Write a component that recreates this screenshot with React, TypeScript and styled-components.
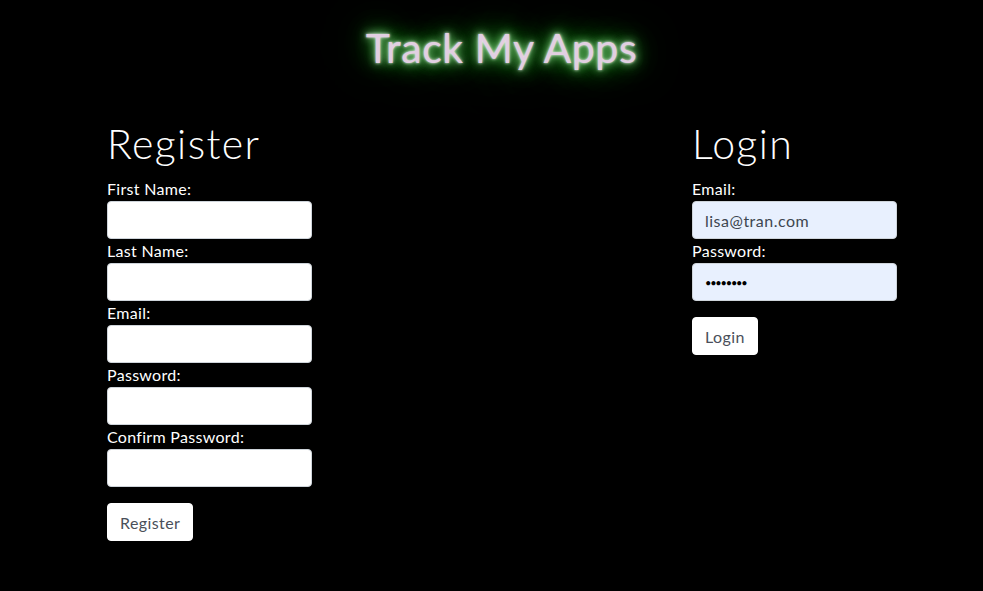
import * as React from 'react';
import styled, { createGlobalStyle } from 'styled-components';

const GlobalStyle = createGlobalStyle`
  html, body {
    margin: 0;
    padding: 0;
    background-color: #000000;
    font-family: "Lato", "Noto Sans", sans-serif;
    color: #ffffff;
  }
  * {
    box-sizing: border-box;
  }
`;

const Page = styled.div`
  min-height: 591px;
  background-color: #000000;
  padding-top: 24px;
`;

const Title = styled.h1`
  margin: 0 0 48px 0;
  text-align: center;
  font-size: 41px;
  line-height: 48px;
  font-weight: 400;
  letter-spacing: 0.6px;
  color: #e2cfe2;
  padding-left: 20px;
  text-shadow:
    0 0 3px #ffffff,
    0 0 8px #a0f0a0,
    0 0 16px #3cb83c,
    0 0 28px #1f9a1f,
    0 0 44px #168016,
    0 0 64px #0e5e0e;
`;

const Columns = styled.div`
  display: flex;
  justify-content: space-between;
  padding: 0 86px 0 107px;
`;

const FormColumn = styled.form`
  width: 205px;
  display: flex;
  flex-direction: column;
`;

const Heading = styled.h2`
  margin: 0 0 9px 0;
  font-size: 41px;
  line-height: 48px;
  font-weight: 300;
  letter-spacing: 1.4px;
  color: #ffffff;
`;

const Label = styled.label`
  display: block;
  font-size: 16px;
  line-height: 24px;
  letter-spacing: 0.3px;
  color: #ffffff;
`;

const Input = styled.input<{ $filled?: boolean; $secret?: boolean }>`
  display: block;
  width: 100%;
  height: 38px;
  padding: 6px 12px;
  font-family: "Lato", "Noto Sans", sans-serif;
  font-size: ${props => props.$secret ? "11px" : "16px"};
  letter-spacing: ${props => props.$secret ? "-1.2px" : "0.5px"};
  color: ${props => props.$secret ? "#000000" : "#3d4650"};
  background-color: ${props => props.$filled ? "#e8f0fe" : "#ffffff"};
  border: 1px solid #ced4da;
  border-radius: 4px;
  outline: none;
`;

const Button = styled.button`
  align-self: flex-start;
  margin-top: 16px;
  height: 38px;
  padding: 6px 12px;
  font-family: "Lato", "Noto Sans", sans-serif;
  font-size: 16px;
  letter-spacing: 0.4px;
  color: #4a4f5a;
  background-color: #ffffff;
  border: 1px solid #ffffff;
  border-radius: 4px;
`;

const registerFields = ["First Name", "Last Name", "Email", "Password", "Confirm Password"];

export default function App() {
  return (
    <Page>
      <GlobalStyle />
      <Title>Track My Apps</Title>
      <Columns>
        <FormColumn>
          <Heading>Register</Heading>
          {registerFields.map((field) => (
            <React.Fragment key={field}>
              <Label>{field}:</Label>
              <Input type={field.includes("Password") ? "password" : "text"} />
            </React.Fragment>
          ))}
          <Button type="button">Register</Button>
        </FormColumn>

        <FormColumn>
          <Heading>Login</Heading>
          <Label>Email:</Label>
          <Input $filled type="text" defaultValue="lisa@tran.com" />
          <Label>Password:</Label>
          <Input $filled $secret type="password" defaultValue="12345678" />
          <Button type="button">Login</Button>
        </FormColumn>
      </Columns>
    </Page>
  );
}
